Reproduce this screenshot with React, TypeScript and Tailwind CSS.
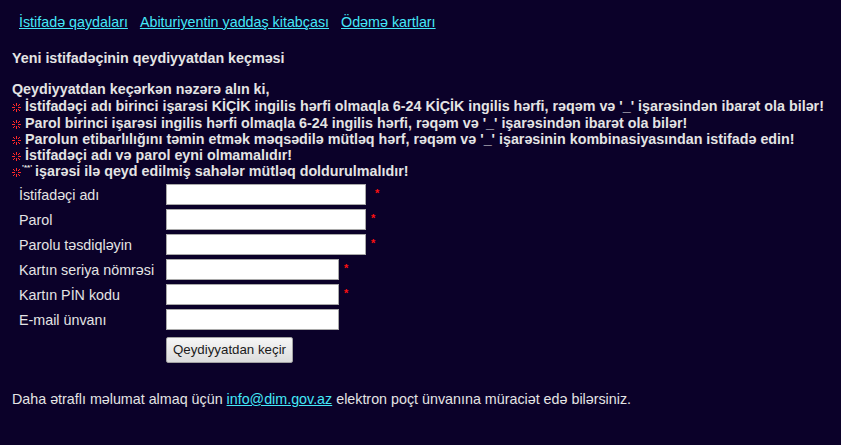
import React from "react";

const Burst = () => (
  <svg width="9" height="9" viewBox="0 0 9 9" className="block shrink-0 mt-[5px] mr-[4px]">
    <g fill="#ff2a2a" shapeRendering="crispEdges">
      <rect x="4" y="0" width="1" height="3" />
      <rect x="4" y="6" width="1" height="3" />
      <rect x="0" y="4" width="3" height="1" />
      <rect x="6" y="4" width="3" height="1" />
      <rect x="1" y="1" width="1" height="1" />
      <rect x="2" y="2" width="1" height="1" />
      <rect x="7" y="1" width="1" height="1" />
      <rect x="6" y="2" width="1" height="1" />
      <rect x="1" y="7" width="1" height="1" />
      <rect x="2" y="6" width="1" height="1" />
      <rect x="7" y="7" width="1" height="1" />
      <rect x="6" y="6" width="1" height="1" />
    </g>
  </svg>
);

const Star = ({ ml }: { ml: string }) => (
  <span className={`text-[#ff1010] text-[11px] font-bold leading-none self-start mt-[4px] ${ml}`}>*</span>
);

const rows: { label: string; w: string; star: boolean; ml: string }[] = [
  { label: "İstifadəçi adı", w: "w-[200px]", star: true, ml: "ml-[9px]" },
  { label: "Parol", w: "w-[200px]", star: true, ml: "ml-[5px]" },
  { label: "Parolu təsdiqləyin", w: "w-[200px]", star: true, ml: "ml-[5px]" },
  { label: "Kartın seriya nömrəsi", w: "w-[173px]", star: true, ml: "ml-[5px]" },
  { label: "Kartın PİN kodu", w: "w-[173px]", star: true, ml: "ml-[5px]" },
  { label: "E-mail ünvanı", w: "w-[173px]", star: false, ml: "" },
];

const notes = [
  "İstifadəçi adı birinci işarəsi KİÇİK ingilis hərfi olmaqla 6-24 KİÇİK ingilis hərfi, rəqəm və '_' işarəsindən ibarət ola bilər!",
  "Parol birinci işarəsi ingilis hərfi olmaqla 6-24 ingilis hərfi, rəqəm və '_' işarəsindən ibarət ola bilər!",
  "Parolun etibarlılığını təmin etmək məqsədilə mütləq hərf, rəqəm və '_' işarəsinin kombinasiyasından istifadə edin!",
  "İstifadəçi adı və parol eyni olmamalıdır!",
];

export default function App() {
  return (
    <div
      className="w-[841px] h-[445px] bg-[#0b0129] text-[#e4e4e4] text-[14.3px] overflow-hidden"
      style={{ fontFamily: '"Liberation Sans", Arial, sans-serif' }}
    >
      <div className="flex gap-[12px] pl-[19px] pt-[14px] leading-[16px]">
        <a className="text-[#44e8f8] underline">İstifadə qaydaları</a>
        <a className="text-[#44e8f8] underline">Abituriyentin yaddaş kitabçası</a>
        <a className="text-[#44e8f8] underline">Ödəmə kartları</a>
      </div>

      <div className="pl-[12px] pt-[20px] font-bold leading-[16px]">Yeni istifadəçinin qeydiyyatdan keçməsi</div>

      <div className="pl-[12px] pt-[14px] font-bold">
        <div className="leading-[18px]">Qeydiyyatdan keçərkən nəzərə alın ki,</div>
        {notes.map((n, i) => (
          <div key={i} className={`flex items-start whitespace-nowrap ${i === 0 ? "leading-[17px] h-[17px]" : "leading-[16px] h-[16px]"}`}>
            <Burst />
            <span>{n}</span>
          </div>
        ))}
        <div className="flex items-start whitespace-nowrap leading-[16px] h-[16px]">
          <Burst />
          <span className="text-[8px] leading-[8px] mt-[1px] -ml-[3px] mr-[3px]">'**'</span>
          <span>işarəsi ilə qeyd edilmiş sahələr mütləq doldurulmalıdır!</span>
        </div>
      </div>

      <div className="pl-[19px] pt-[5px] flex flex-col gap-[4px]">
        {rows.map((r) => (
          <div key={r.label} className="flex items-center h-[21px]">
            <div className="w-[147px] leading-[16px]">{r.label}</div>
            <input className={`${r.w} h-[21px] bg-white border border-[#a9a9a9] outline-none`} />
            {r.star && <Star ml={r.ml} />}
          </div>
        ))}
        <div className="flex pl-[147px] pt-[3px]">
          <button className="w-[127px] h-[26px] border border-[#a3a3a3] rounded-[2px] bg-gradient-to-b from-[#f6f6f6] to-[#dcdcdc] text-[#1a1a1a] text-[13.3px] leading-none">
            Qeydiyyatdan keçir
          </button>
        </div>
      </div>

      <div className="pl-[12px] pt-[28px] leading-[16px]">
        Daha ətraflı məlumat almaq üçün <a className="text-[#44e8f8] underline">info@dim.gov.az</a> elektron poçt ünvanına müraciət edə bilərsiniz.
      </div>
    </div>
  );
}
